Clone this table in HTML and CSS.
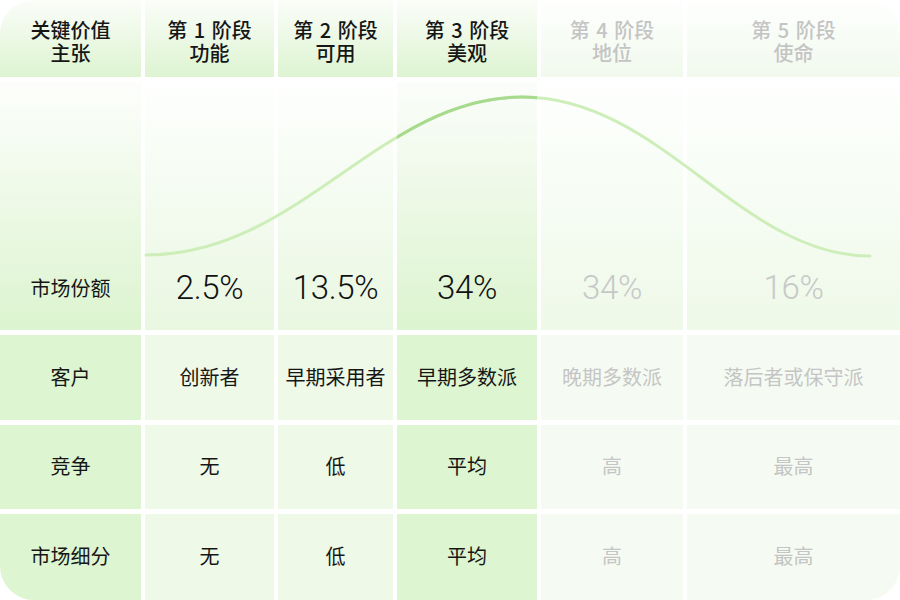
FILE: index.html
```html
<!DOCTYPE html>
<html lang="zh-CN">
<head>
<meta charset="utf-8">
<title>价值主张阶段</title>
<link rel="stylesheet" href="styles.css">
</head>
<body>
<div class="board">
  <div class="grid">
    <div class="cell head c1"><span class="ln">关键价值</span><span class="ln">主张</span></div>
    <div class="cell head"><span class="ln">第 1 阶段</span><span class="ln">功能</span></div>
    <div class="cell head"><span class="ln">第 2 阶段</span><span class="ln">可用</span></div>
    <div class="cell head"><span class="ln">第 3 阶段</span><span class="ln">美观</span></div>
    <div class="cell head dim"><span class="ln">第 4 阶段</span><span class="ln">地位</span></div>
    <div class="cell head dim"><span class="ln">第 5 阶段</span><span class="ln">使命</span></div>

    <div class="cell chart c1"><span class="label">市场份额</span></div>
    <div class="cell chart mid"><span class="num">2.5%</span></div>
    <div class="cell chart mid"><span class="num">13.5%</span></div>
    <div class="cell chart hi"><span class="num">34%</span></div>
    <div class="cell chart dim"><span class="num">34%</span></div>
    <div class="cell chart dim"><span class="num">16%</span></div>

    <div class="cell row c1">客户</div>
    <div class="cell row mid">创新者</div>
    <div class="cell row mid">早期采用者</div>
    <div class="cell row hi">早期多数派</div>
    <div class="cell row dim">晚期多数派</div>
    <div class="cell row dim">落后者或保守派</div>

    <div class="cell row c1">竞争</div>
    <div class="cell row mid">无</div>
    <div class="cell row mid">低</div>
    <div class="cell row hi">平均</div>
    <div class="cell row dim">高</div>
    <div class="cell row dim">最高</div>

    <div class="cell row c1">市场细分</div>
    <div class="cell row mid">无</div>
    <div class="cell row mid">低</div>
    <div class="cell row hi">平均</div>
    <div class="cell row dim">高</div>
    <div class="cell row dim">最高</div>
  </div>
  <svg class="curve" width="900" height="600" viewBox="0 0 900 600" xmlns="http://www.w3.org/2000/svg">
    <defs>
      <clipPath id="stage3"><rect x="397" y="0" width="140" height="600"/></clipPath>
    </defs>
    <path d="M146,255 C300,255 380,97 522,97 C662,97 740,256 870,256" fill="none" stroke="#cdeeb9" stroke-width="3" stroke-linecap="round"/>
    <path d="M146,255 C300,255 380,97 522,97 C662,97 740,256 870,256" fill="none" stroke="#a8da8e" stroke-width="3" clip-path="url(#stage3)"/>
  </svg>
</div>
</body>
</html>
```
FILE: styles.css
```css
html, body {
  margin: 0;
  padding: 0;
  background: #ffffff;
}

body {
  font-family: "Noto Sans CJK SC", "Noto Sans", sans-serif;
  color: #161616;
}

.board {
  position: relative;
  width: 900px;
  height: 600px;
  border-radius: 34px;
  overflow: hidden;
}

.grid {
  display: grid;
  grid-template-columns: 141px 129px 115px 140px 142px 213px;
  grid-template-rows: 77px 248px 85px 84px 86px;
  column-gap: 4px;
  row-gap: 5px;
  width: 900px;
  height: 600px;
}

.cell {
  display: flex;
  align-items: center;
  justify-content: center;
  text-align: center;
  font-size: 20px;
  line-height: 23px;
  box-sizing: border-box;
}

.head {
  flex-direction: column;
  font-weight: 500;
  word-spacing: 2px;
  background: linear-gradient(to bottom, #fbfdf9 0%, #ddf4d1 100%);
  padding-top: 4px;
}

.ln {
  display: block;
  height: 23px;
  line-height: 23px;
}

.head.dim {
  color: #c4c4c4;
  background: linear-gradient(to bottom, #fefffe 0%, #f1f9ed 100%);
}

.chart {
  flex-direction: column;
  justify-content: flex-end;
  padding-bottom: 25px;
}

.chart.c1 {
  background: linear-gradient(to bottom, #fdfefc 0%, #dcf4cf 100%);
}

.chart.mid {
  background: linear-gradient(to bottom, #fefffe 0%, #e9f7e1 100%);
}

.chart.hi {
  background: linear-gradient(to bottom, #fbfdfa 0%, #dcf4cf 100%);
}

.chart.dim {
  background: linear-gradient(to bottom, #fefffe 0%, #eef9e8 100%);
}

.label {
  line-height: 34px;
  font-size: 20px;
}

.num {
  font-family: Roboto, "Liberation Sans", sans-serif;
  font-weight: 300;
  font-size: 33px;
  line-height: 34px;
  letter-spacing: -0.3px;
  color: #111111;
}

.chart.dim .num {
  color: #c8c8c8;
}

.row {
  padding-bottom: 3px;
}

.row.c1 {
  background: #ddf5d1;
}

.row.mid {
  background: #eef9e8;
}

.row.hi {
  background: #ddf5d1;
}

.row.dim {
  background: #f5fbf2;
  color: #c5c5c5;
}

.curve {
  position: absolute;
  left: 0;
  top: 0;
  pointer-events: none;
}
```
